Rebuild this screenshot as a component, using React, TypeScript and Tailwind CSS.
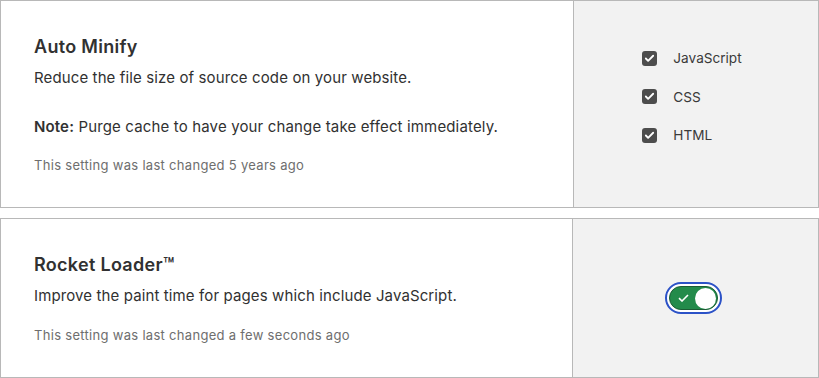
import { Check } from "lucide-react"

function CheckRow({ label }: { label: string }) {
  return (
    <label className="flex h-[38.5px] items-center gap-4">
      <span className="flex h-[15px] w-[15px] items-center justify-center rounded-[3px] bg-[#4d4d4d]">
        <Check className="h-[11px] w-[11px] text-white" strokeWidth={4} />
      </span>
      <span className="text-[13.6px] text-[#3a3a3a]">{label}</span>
    </label>
  )
}

function Toggle() {
  return (
    <div className="rounded-full border-2 border-[#2c52c7] bg-white p-[2px]">
      <div className="flex h-[24px] w-[49px] items-center justify-between rounded-full border border-[#1b5c34] bg-[#238b4b] pl-[8px] pr-[1px]">
        <svg width="11" height="8" viewBox="0 0 11 8" fill="none">
          <path d="M1 4.2 L4 7 L10 1" stroke="white" strokeWidth="1.6" />
        </svg>
        <span className="h-[21px] w-[21px] rounded-full bg-white" />
      </div>
    </div>
  )
}

export default function App() {
  return (
    <div
      className="flex w-[819px] flex-col gap-[10px] bg-white text-[#313131]"
      style={{ fontFamily: "Inter, 'Noto Sans', sans-serif" }}
    >
      {/* Auto Minify */}
      <div className="flex h-[208px] border border-[#b8b8b8]">
        <div className="flex-1 px-[33px] pt-[34px]">
          <h2 className="text-[18px] leading-[24px] font-semibold tracking-[0.3px]">Auto Minify</h2>
          <p className="mt-2 text-[15px] leading-[22px] tracking-[0.12px]">
            Reduce the file size of source code on your website.
          </p>
          <p className="mt-[27px] text-[15px] leading-[22px] tracking-[0.15px]">
            <span className="font-semibold">Note:</span> Purge cache to have your change take effect immediately.
          </p>
          <p className="mt-[18px] text-[13px] leading-[18px] tracking-[0.3px] text-[#6e6e6e]">
            This setting was last changed 5 years ago
          </p>
        </div>
        <div className="flex w-[245px] justify-center border-l border-[#b8b8b8] bg-[#f2f2f2] pt-[38px] pr-[8px]">
          <div className="flex flex-col">
            <CheckRow label="JavaScript" />
            <CheckRow label="CSS" />
            <CheckRow label="HTML" />
          </div>
        </div>
      </div>

      {/* Rocket Loader */}
      <div className="flex h-[160px] border border-[#b8b8b8]">
        <div className="flex-1 px-[33px] pt-[34px]">
          <h2 className="text-[18px] leading-[24px] font-semibold tracking-[0.3px]">Rocket Loader™</h2>
          <p className="mt-2 text-[15px] leading-[22px] tracking-[0.12px]">
            Improve the paint time for pages which include JavaScript.
          </p>
          <p className="mt-[19px] text-[13px] leading-[18px] tracking-[0.3px] text-[#6e6e6e]">
            This setting was last changed a few seconds ago
          </p>
        </div>
        <div className="flex w-[246px] items-center justify-center border-l border-[#b8b8b8] bg-[#f2f2f2] pr-[4px]">
          <Toggle />
        </div>
      </div>
    </div>
  )
}
